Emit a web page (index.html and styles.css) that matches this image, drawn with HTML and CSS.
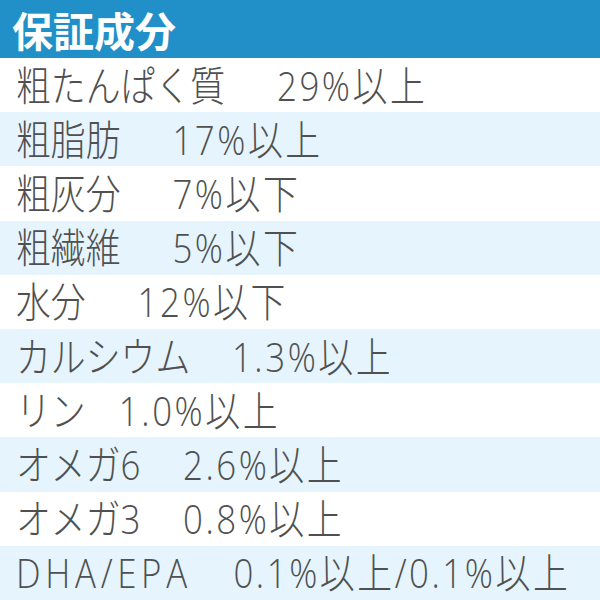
FILE: index.html
```html
<!DOCTYPE html>
<html lang="ja">
<head>
<meta charset="utf-8">
<link rel="stylesheet" href="styles.css">
</head>
<body>
<div class="table">
  <div class="header">保証成分</div>
  <div class="row"><span class="txt"><span class="name">粗たんぱく質</span><span class="val g-kanji">29%以上</span></span></div>
  <div class="row alt"><span class="txt"><span class="name">粗脂肪</span><span class="val g-kanji">17%以上</span></span></div>
  <div class="row"><span class="txt"><span class="name">粗灰分</span><span class="val g-kanji">7%以下</span></span></div>
  <div class="row alt"><span class="txt"><span class="name">粗繊維</span><span class="val g-kanji">5%以下</span></span></div>
  <div class="row"><span class="txt"><span class="name">水分</span><span class="val g-kanji">12%以下</span></span></div>
  <div class="row alt"><span class="txt"><span class="name">カルシウム</span><span class="val g-ca">1.3%以上</span></span></div>
  <div class="row"><span class="txt"><span class="name">リン</span><span class="val g-p">1.0%以上</span></span></div>
  <div class="row alt"><span class="txt"><span class="name">オメガ6</span><span class="val g-omega">2.6%以上</span></span></div>
  <div class="row"><span class="txt"><span class="name">オメガ3</span><span class="val g-omega">0.8%以上</span></span></div>
  <div class="row alt"><span class="txt"><span class="name latin">DHA/EPA</span><span class="val g-dha">0.1%以上/0.1%以上</span></span></div>
</div>
</body>
</html>
```

FILE: styles.css
```css
html, body {
  margin: 0;
  padding: 0;
  background: #ffffff;
}
.table {
  width: 600px;
  height: 600px;
  display: flex;
  flex-direction: column;
  font-family: "Noto Sans CJK JP", "Noto Sans", sans-serif;
}
.header {
  height: 58px;
  flex: none;
  background: #2290c8;
  color: #ffffff;
  font-weight: 700;
  font-size: 41px;
  line-height: 58px;
  padding-left: 12px;
  box-sizing: border-box;
}
.row {
  flex: 1;
  display: flex;
  align-items: center;
  padding-left: 16px;
  color: #505050;
  white-space: nowrap;
  min-width: 0;
}
.alt {
  background: #e5f4fd;
}
.txt {
  display: inline-block;
  flex: none;
  margin-right: -120px;
  font-family: "Open Sans", "Noto Sans CJK JP", sans-serif;
  font-size: 41px;
  font-weight: 300;
  line-height: 1;
  transform: scaleX(0.85);
  transform-origin: 0 50%;
}
.val {
  letter-spacing: 3px;
}
.latin {
  letter-spacing: 5.5px;
}
.g-kanji { margin-left: 61px; }
.g-ca { margin-left: 49px; }
.g-p { margin-left: 39px; }
.g-omega { margin-left: 50px; }
.g-dha { margin-left: 49px; }
```
